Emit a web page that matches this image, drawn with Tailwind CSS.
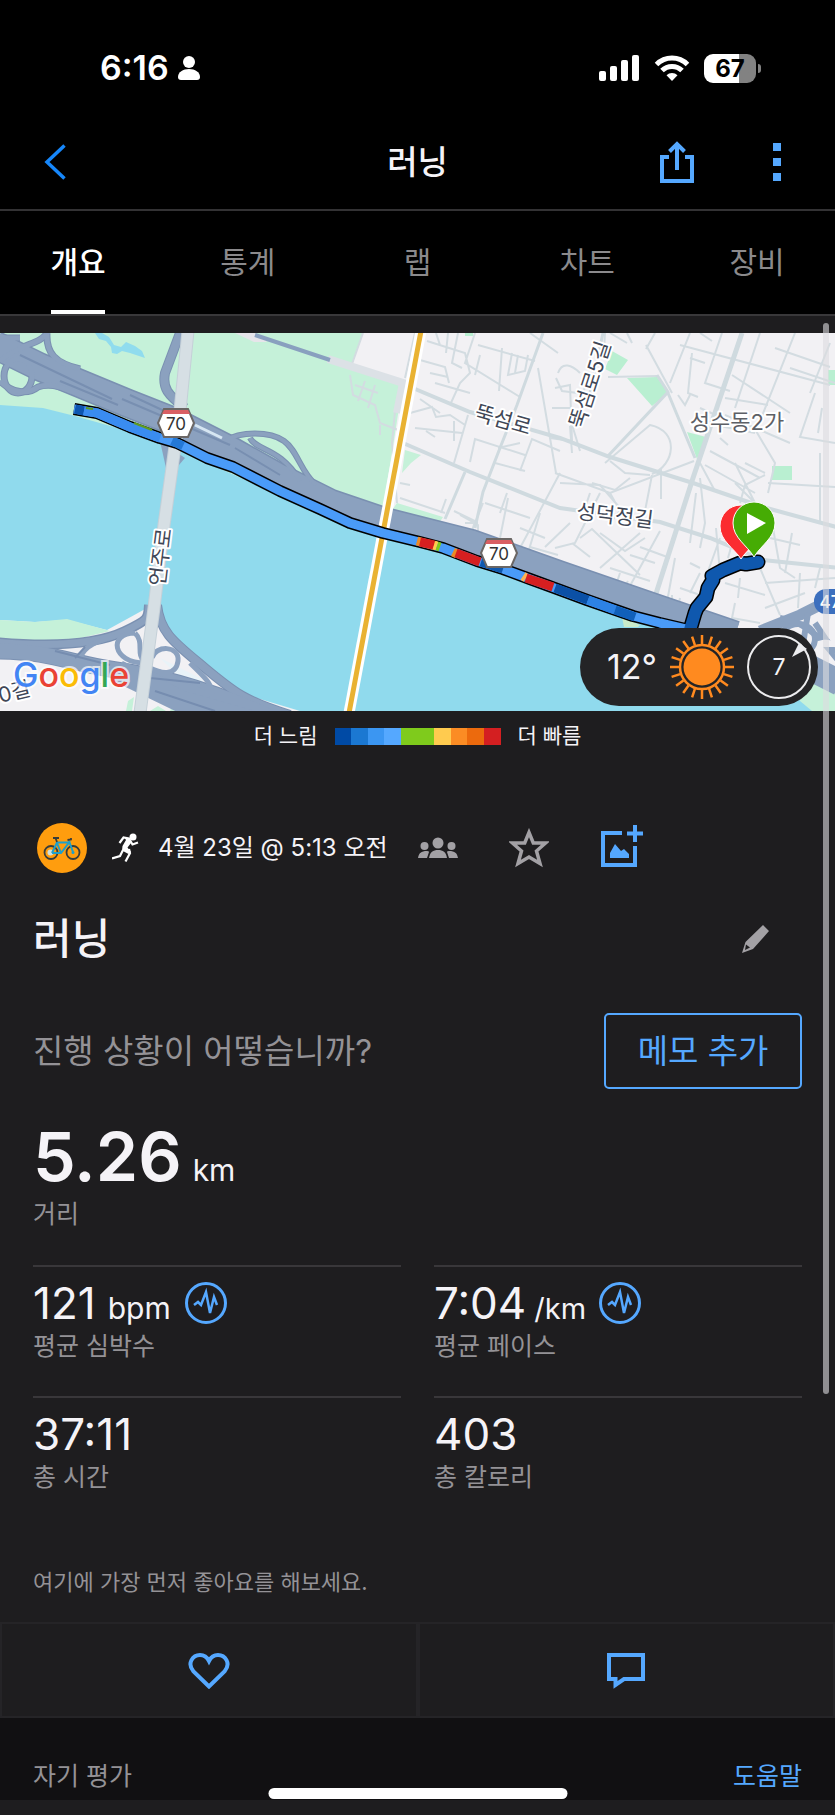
<!DOCTYPE html>
<html lang="ko">
<head>
  <meta charset="UTF-8">
  <meta name="viewport" content="width=device-width, initial-scale=1.0">
  <title>러닝</title>
  <script src="https://cdn.jsdelivr.net/npm/@tailwindcss/browser@4"></script>
</head>
<body class="relative min-h-screen bg-[#1e1d1f] text-[#f5f3f7] font-['Inter','Noto_Sans_CJK_KR',sans-serif]">

  <header class="bg-black">
    <!-- Status bar -->
    <div class="flex items-center justify-between pt-[50px] pb-[29px] pl-[100px] pr-[74px] text-white">
      <div class="flex items-center gap-2 h-9">
        <span class="text-[34px] leading-9 font-semibold">6:16</span>
        <svg class="w-6 h-6" viewBox="0 0 24 24" fill="currentColor"><circle cx="12" cy="6" r="6"/><path d="M1 21c0-5 5-8 11-8s11 3 11 8c0 2-1 3-3 3H4c-2 0-3-1-3-3z"/></svg>
      </div>
      <div class="flex items-center gap-[14px]">
        <svg class="w-[41px] h-[26px]" viewBox="0 0 41 26" fill="currentColor">
          <rect x="0" y="16" width="7" height="10" rx="2"/><rect x="11" y="11" width="7" height="15" rx="2"/><rect x="22" y="5" width="7" height="21" rx="2"/><rect x="33" y="0" width="7" height="26" rx="2"/>
        </svg>
        <svg class="w-[36px] h-[26px]" viewBox="0 0 36 26" fill="none" stroke="currentColor" stroke-width="5">
          <path d="M2.500 9.500a22 22 0 0 1 31 0"/><path d="M8 15.500a14.200 14.200 0 0 1 20 0"/><path d="M18 26l-5.500-5.800a8 8 0 0 1 11 0z" fill="currentColor" stroke="none"/>
        </svg>
        <div class="flex items-center gap-[2px]">
          <div class="w-[52px] h-[29px] rounded-[9px] bg-linear-to-r from-white from-67% to-[#828282] to-67% text-black text-[24px] leading-[29px] font-bold text-center">67</div>
          <div class="w-[3px] h-[9px] rounded-r-full bg-[#828282]"></div>
        </div>
      </div>
    </div>

    <!-- Title bar -->
    <div class="grid grid-cols-[1fr_auto_1fr] items-center h-[96px] pl-[44px] pr-[54px] border-b-2 border-[#333234]">
      <button aria-label="뒤로" class="justify-self-start">
        <svg class="w-[24px] h-[38px]" viewBox="0 0 24 38" fill="none" stroke="#1687fb" stroke-width="3.500"><path d="M20.500 2.500L3 19l17.500 16.500"/></svg>
      </button>
      <h1 class="text-[33px] leading-10 font-medium pl-[10px]">러닝</h1>
      <div class="flex items-center justify-self-end gap-[79px]">
        <button aria-label="공유">
          <svg class="w-[34px] h-[42px]" viewBox="0 0 34 42" fill="none" stroke="#55a8ff" stroke-width="4"><path d="M9 16H2v24h30V16h-7M17 29V4M9.500 10.500L17 3l7.500 7.500"/></svg>
        </button>
        <button aria-label="더 보기">
          <svg class="w-2 h-[38px]" viewBox="0 0 8 38" fill="#55a8ff"><path d="M0 0h8v8H0zM0 15h8v8H0zM0 30h8v8H0z"/></svg>
        </button>
      </div>
    </div>

    <!-- Tabs -->
    <nav class="flex justify-between px-[51px] h-[105px] border-b-2 border-[#39383a] text-[30px] text-[#8b8a8c] whitespace-nowrap">
      <a href="#" class="flex items-center justify-center w-[54px] pt-1 border-b-4 border-white text-white font-medium">개요</a>
      <a href="#" class="flex items-center justify-center w-[54px] pt-1 border-b-4 border-transparent">통계</a>
      <a href="#" class="flex items-center justify-center w-[54px] pt-1 border-b-4 border-transparent">랩</a>
      <a href="#" class="flex items-center justify-center w-[54px] pt-1 border-b-4 border-transparent">차트</a>
      <a href="#" class="flex items-center justify-center w-[54px] pt-1 border-b-4 border-transparent">장비</a>
    </nav>
  </header>

  <!-- Map -->
  <section class="relative mt-[17px] h-[378px] overflow-hidden">
    <svg class="w-full h-full" viewBox="0 0 835 378" preserveAspectRatio="xMidYMid slice">
      <rect width="835" height="378" fill="#f2f1f4"/>

      <!-- parks -->
      <g fill="#c5f1d9">
        <path d="M0 0H363L352 32L403 50L380 195L0 110z"/>
        <path d="M405 117L421 122L411 130L402 140zM397 170L443 184L437 193L390 180z"/>
        <path d="M605 36L612 18L628 27L617 42zM627 45L657 44L668 60L652 73zM687 99L706 104L697 126zM772 133h20v14h-20zM828 37h8v15h-8zM465 0h8v3h-8z" fill="#b9efd1"/>
      </g>
      <path d="M235 0h20l14 5-3 4h-12z" fill="#e6e5ea"/>
      <path d="M95 0L99 6L106 8L111 14L112 20L117 21L122 18L130 20L145 25L142 18L135 13L126 9L121 14L114 12L109 4L102 0z" fill="#90dcee"/>

      <!-- small streets -->
      <g fill="none" stroke="#d3dce1" stroke-width="2">
        <path d="M363 0L352 31M415 0L405 45M350 42L353 62L375 72L380 90L398 97M355 52L378 60M365 48L358 68M375 52L368 75M395 78L392 110L397 170M380 92V102"/>
        <path d="M420 27L445 34L449 50M427 8L465 20L470 40L460 50L450 72M436 0L440 12M448 0L446 20M458 0L452 30L462 35M475 0L465 30L520 64M478 12L535 28M480 22L475 42M502 15L499 58M512 20L508 42L525 38L528 22M518 22L515 40M430 40L448 44M435 50L470 60"/>
        <path d="M410 80L432 74L436 84L450 82L465 92M415 95L462 100M420 66L440 80M426 98L435 104M454 88V108M468 82L454 130M470 129L475 106L525 122M498 115L520 110M495 130L525 138M520 138L532 106L560 118M530 0L558 20M538 35L556 140M560 140L520 215M555 55L570 52L572 108L550 105M552 75H572"/>
        <path d="M400 150L410 152M400 165L445 180M446 166L441 180M454 178L475 188L470 205M485 170L530 185M500 180L507 160M483 170L475 190M508 165L500 205M460 182L478 192V202M465 190H478M540 180L525 230M520 195L545 205M545 214L570 190M530 214L558 222"/>
        <path d="M558 40C562 28 572 32 580 40M556 45L562 58L578 60M570 85L580 118M608 44L657 43M605 0L604 18M610 0L627 10M627 0L632 10M646 12L672 60M646 16L655 0M585 50L580 95M570 93L572 120M605 130L650 92C680 98 675 132 652 141M610 128L625 140L650 142M630 145L615 157L592 150M652 142L645 178M661 136V166"/>
        <path d="M555 140L610 160L694 128M560 150L600 152L620 175M600 160L575 210L555 215M610 160L620 178L610 190M590 160L585 175M580 205L592 196L640 242M572 210L590 224M640 200L600 235M600 200L625 218L645 205M660 198L625 262M610 235L650 248M620 240L615 255L660 265M630 222L655 230M640 214L670 225"/>
        <path d="M670 50L690 0M690 62L685 72L678 62M690 25L705 30M692 20L688 60L698 64M680 12L830 52M700 0L712 8M722 0L705 50L730 58M725 65L768 72M732 42L790 80M760 0L735 75M795 0L756 98L775 130L768 160M775 15L830 34M830 10L810 60M790 35L835 50M725 82L790 110M815 60L800 104L835 110M822 75L818 100"/>
        <path d="M700 75L745 95M705 90L755 100M720 105L728 112M710 118L760 145M700 130L715 158M765 142L745 152L740 170M705 132L755 160M745 130L765 140M768 150L835 154M820 120L820 190M755 175L770 200M735 130L755 170L735 150M700 145L705 190L700 215"/>
        <path d="M696 160L690 210M716 195L720 240M720 205L702 255M735 200L728 225M773 195L780 235L795 245M770 205L800 212M792 200L785 240M700 240L690 260M675 225L665 280M680 255L700 262M690 230L700 235M725 250L765 262M740 245L738 265M760 235L780 282M765 250L835 245M800 240L798 275M765 275L805 260M820 235L815 255M735 270L732 285L760 290"/>
        <path d="M620 260L645 268M628 248L622 258M668 268L662 282M672 262L672 285M680 265L677 280"/>
        <path d="M0 320L50 325M5 322L12 340M20 350L25 378M70 345V378M0 370L60 350M60 352L130 372M50 378L95 352M100 350V378"/>
      </g>

      <!-- larger streets -->
      <g fill="none" stroke="#cfdadf" stroke-width="4">
        <path d="M408 53L470 79L560 105L610 124L693 150L763 174L840 195"/>
        <path d="M403 110L470 139L560 175L660 189L710 205L763 227L840 235"/>
        <path d="M543 0L517 72L500 115L483 159L475 195M465 139L445 186" stroke-width="3"/>
        <path d="M742 0L693 145L653 270" stroke-width="5"/>
        <path d="M657 42L668 59L608 123M668 60L695 125M603 0L590 60" stroke-width="3"/>
        <path d="M328 26L403 50L397 80" stroke-width="8" stroke="#dce1e6"/>
      </g>
      <path d="M255 2L330 27" stroke="#89a0bf" stroke-width="4"/>

      <!-- river -->
      <path d="M0 72L43 75L75 83L160 107L207 130L280 162L350 194L417 210L477 232L560 260L620 284L683 298L760 335L835 360V378H300L253 364L213 341L190 320L160 290L147 275L107 297L67 287L35 289L0 287z" fill="#90daed"/>
      <path d="M0 287L35 289L67 286L110 298L60 310H0z" fill="#c5f1d9"/>
      <path d="M798 340L835 350V378H812L800 368z" fill="#c5f1d9"/>
      <path d="M622 284L640 292L638 294H624z" fill="#c9eccb"/>
      <path d="M185 340L230 365L290 378H170z" fill="#c5f1d9"/>

      <!-- riverside expressway, north bank -->
      <g fill="none" stroke-linejoin="round">
        <g stroke="#7a90b1" stroke-width="7">
          <path d="M47 0C46 20 55 30 80 36M-2 5H20M0 28C20 10 40 12 47 0"/>
          <ellipse cx="18" cy="43" rx="14" ry="17"/>
          <path d="M0 48C12 60 28 62 38 54C55 48 70 58 110 74"/>
          <path d="M180 0L165 40C162 55 168 62 185 75" stroke-width="10"/>
          <path d="M225 108C240 98 270 98 284 108S300 138 316 152M250 105C256 118 280 114 300 148" stroke-width="6"/>
        </g>
        <path d="M-5 12L40 34L127 70L173 88L230 117L280 145L330 170L383 188L470 210L560 242L650 273L735 302" stroke="#7a90b1" stroke-width="29"/>
        <path d="M-5 12L40 34L127 70L173 88L230 117L280 145L330 170L383 188L470 210L560 242L650 273L735 302" stroke="#8ba1bf" stroke-width="26"/>
        <g stroke="#8ba1bf" stroke-width="5">
          <path d="M47 0C46 20 55 30 80 36M-2 5H20M0 28C20 10 40 12 47 0"/>
          <ellipse cx="18" cy="43" rx="14" ry="17"/>
          <path d="M0 48C12 60 28 62 38 54C55 48 70 58 110 74"/>
          <path d="M180 0L165 40C162 55 168 62 185 75" stroke-width="8"/>
          <path d="M225 108C240 98 270 98 284 108S300 138 316 152M250 105C256 118 280 114 300 148" stroke-width="4"/>
        </g>
        <path d="M20 22L112 66M122 66L230 112M60 48L118 72M130 62L190 90M235 115L280 142" stroke="#788fb1" stroke-width="2"/>
        <path d="M195 92L222 105" stroke="#d6e6f2" stroke-width="3"/>
        <!-- east interchange -->
        <g stroke="#8ba1bf">
          <path d="M760 298L800 282L840 262" stroke-width="11"/>
          <path d="M765 312L840 350" stroke-width="26"/>
          <ellipse cx="798" cy="306" rx="17" ry="15" stroke-width="6"/>
          <path d="M815 290L835 320M808 280L800 330M780 285C810 290 825 310 840 330" stroke-width="6"/>
        </g>
        <path d="M818 308C830 305 835 308 837 314H817z" fill="#f2f1f4"/>
      </g>

      <!-- south bank -->
      <path d="M0 325L60 335L130 362L128 378H0z" fill="#f2f1f4"/>
      <path d="M160 325L200 345L215 360L180 345z" fill="#e9f3f8"/>
      <g fill="none" stroke-linejoin="round">
        <g stroke="#7a90b1">
          <path d="M-5 309C60 315 100 310 125 298S148 285 149 272" stroke-width="10"/>
          <path d="M157 272C160 300 175 310 205 335S245 368 290 382" stroke-width="10"/>
          <path d="M-5 318C50 318 70 330 110 336S200 352 270 384" stroke-width="17"/>
        </g>
        <g stroke="#8ba1bf">
          <path d="M-5 309C60 315 100 310 125 298S148 285 149 272" stroke-width="7"/>
          <path d="M157 272C160 300 175 310 205 335S245 368 290 382" stroke-width="8"/>
          <path d="M-5 318C50 318 70 330 110 336S200 352 270 384" stroke-width="15"/>
          <path d="M118 338L180 368L250 388" stroke-width="22"/>
          <path d="M80 325C85 312 98 308 115 303M135 300C108 300 112 330 145 330M135 300C145 310 135 320 145 330" stroke-width="5"/>
          <path d="M152 325C155 312 180 312 178 328S160 340 150 335M160 340C180 350 200 345 212 362M190 330C205 345 212 350 212 362" stroke-width="5"/>
        </g>
        <path d="M55 318L110 332M150 345L200 350M155 358L215 378M75 325L85 314" stroke="#768db0" stroke-width="2"/>
      </g>
      <path d="M128 368l6-4-2 14h-6zM150 378l8-5 8 5z" fill="#c5f1d9"/>

      <!-- Yeongdong bridge -->
      <path d="M160 108L166 135L172 140L185 125z" fill="#8ba1bf"/>
      <path d="M188 -2L180 78L164 192L154 275L140 380" fill="none" stroke="#c5d0d8" stroke-width="13"/>
      <path d="M188 -2L180 78L164 192L154 275L140 380" fill="none" stroke="#d6dfe4" stroke-width="11"/>

      <!-- subway line -->
      <path d="M421 -2L349 380" stroke="#fff" stroke-width="11"/>
      <path d="M421 -2L349 380" stroke="#e9b232" stroke-width="5"/>

      <!-- run track -->
      <g fill="none" stroke-linejoin="round">
        <path d="M74 76L97 80L130 94L160 105L177 110L207 125L233 134L280 158L320 176L350 190L383 200L420 209L443 215L477 228L503 236L530 246L560 257L587 267L633 283L660 290L690 297" stroke="#000" stroke-width="12"/>
        <path d="M690 297L695 280L697 275L706 264L708 255L713 247L712 243L723 237L740 230L746 231L758 229" stroke="#000" stroke-width="15" stroke-linecap="round"/>
        <path d="M74 76L97 80L130 94L160 105L177 110L207 125L233 134L280 158L320 176L350 190L383 200L420 209L443 215L477 228L503 236L530 246L560 257L587 267L633 283L660 290L690 297" stroke="#4a9bf8" stroke-width="9"/>
        <path d="M690 297L695 280L697 275L706 264L708 255L713 247L712 243L723 237L740 230L746 231L758 229" stroke="#0f58ae" stroke-width="12" stroke-linecap="round"/>
        <g stroke-width="9">
          <path d="M75 76L84 78" stroke="#0d56b0"/>
          <path d="M84 78L97 80L130 94L160 105" stroke="#3a8cf0"/>
          <path d="M172 108L183 113" stroke="#2478d6"/>
          <path d="M417 208L436 213" stroke="#ec8a25"/><path d="M420 209L434 212" stroke="#d61f20"/>
          <path d="M434 212L437 213" stroke="#ffcb4f"/><path d="M437 213L440 214" stroke="#7fcb1c"/>
          <path d="M453 219L457 221" stroke="#ec8a25"/><path d="M456 220L480 229" stroke="#d61f20"/>
          <path d="M481 229L503 236" stroke="#0f58ae"/>
          <path d="M523 243L526 245" stroke="#ffb34f"/><path d="M526 245L553 254" stroke="#d61f20"/>
          <path d="M555 255L588 267" stroke="#0b50a6"/>
          <path d="M588 267L615 277" stroke="#2d82e4"/>
          <path d="M615 277L635 284" stroke="#1160ba"/>
        </g>
        <path d="M86 75L93 76M134 90L152 97" stroke="#5f9c22" stroke-width="2"/>
      </g>

      <!-- street labels -->
      <g font-size="21" fill="#3f4756" stroke="#fff" stroke-width="4" stroke-linejoin="round" paint-order="stroke" text-anchor="middle">
        <text transform="translate(168 225) rotate(-83)">언주로</text>
        <text transform="translate(501 94) rotate(16)">뚝섬로</text>
        <text transform="translate(597 54) rotate(-72)">뚝섬로5길</text>
        <text transform="translate(614 190) rotate(7)">성덕정길</text>
        <text x="737" y="97" fill="#5d6066" font-size="22">성수동2가</text>
        <text transform="translate(16 366) rotate(-14)">0길</text>
      </g>

      <!-- route shields -->
      <g font-size="17" text-anchor="middle">
        <g transform="translate(176 90)">
          <path d="M-12-14H12L18 0L12 14H-12L-18 0z" fill="#fff" stroke="#6b6765" stroke-width="2"/>
          <path d="M-12-13H12L14-9H-14z" fill="#d95f63"/>
          <text y="7" fill="#333">70</text>
        </g>
        <g transform="translate(499 220)">
          <path d="M-12-14H12L18 0L12 14H-12L-18 0z" fill="#fff" stroke="#6b6765" stroke-width="2"/>
          <path d="M-12-13H12L14-9H-14z" fill="#d95f63"/>
          <text y="7" fill="#333">70</text>
        </g>
        <rect x="814" y="256" width="40" height="25" rx="12" fill="#3c6fbe"/>
        <text x="830" y="275" fill="#fff" font-weight="500">47</text>
      </g>

      <!-- finish and start pins -->
      <path d="M741 226C734 215 720 208 720 193a21 21 0 0 1 42 0C762 208 748 215 741 226z" fill="#fb2c30" stroke="#fff" stroke-width="1"/>
      <path d="M754 224C747 212 733 205 733 190a21 21 0 0 1 42 0C775 205 761 212 754 224z" fill="#46ac04" stroke="#fff" stroke-width="1"/>
      <path d="M747 180L766 190L747 201z" fill="#fff"/>

      <text x="13" y="354" font-size="34" font-weight="500" stroke="#fff" stroke-opacity=".7" stroke-width="4" paint-order="stroke"><tspan fill="#4285f4">G</tspan><tspan fill="#ea4335">o</tspan><tspan fill="#fbbc05">o</tspan><tspan fill="#4285f4">g</tspan><tspan fill="#34a853">l</tspan><tspan fill="#ea4335">e</tspan></text>
    </svg>

    <!-- Weather pill -->
    <div class="absolute right-[17px] bottom-[5px] flex items-center justify-between w-[238px] h-[78px] rounded-full bg-[#242426] pl-[27px] pr-[6px]">
      <span class="text-[34px] leading-10">12°</span>
      <div class="flex items-center gap-3">
        <svg class="w-[64px] h-[64px]" viewBox="-32 -32 64 64" fill="none" stroke="#ff8a1f">
          <circle r="18.500" fill="#ff8a1f" stroke="none"/>
          <circle r="22" stroke-width="2.500"/>
          <g stroke-width="2.500">
            <path d="M0-23V-32M0 23V32M23 0H32M-23 0H-32"/>
            <path d="M7.100-21.900L9.900-30.400M-7.100 21.900L-9.900 30.400M21.900 7.100L30.400 9.900M-21.900-7.100L-30.400-9.900"/>
            <path d="M13.500-18.600L18.800-25.900M-13.500 18.600L-18.800 25.900M18.600 13.500L25.900 18.800M-18.600-13.500L-25.900-18.800"/>
            <path d="M18.600-13.500L25.900-18.800M-18.600 13.500L-25.900 18.800M13.500 18.600L18.800 25.900M-13.500-18.600L-18.800-25.900"/>
            <path d="M21.900-7.100L30.400-9.900M-21.900 7.100L-30.400 9.900M7.100 21.900L9.900 30.400M-7.100-21.900L-9.900-30.400"/>
          </g>
        </svg>
        <svg class="w-[66px] h-[66px]" viewBox="-33 -33 66 66">
          <circle r="31" fill="none" stroke="#ececee" stroke-width="2"/>
          <path d="M28-18L13-10L20-24z" fill="#ececee"/>
          <text y="8" font-size="23" fill="#f5f3f7" text-anchor="middle">7</text>
        </svg>
      </div>
    </div>
  </section>

  <!-- Pace legend -->
  <div class="flex items-center justify-center gap-[17px] h-[50px] text-[21px] leading-[30px]">
    <span>더 느림</span>
    <div class="grid grid-cols-10 w-[166px] h-[17px]">
      <i class="bg-[#004aa5]"></i><i class="bg-[#1b78d2]"></i><i class="bg-[#3b96f2]"></i><i class="bg-[#55a8ff]"></i><i class="bg-[#7fcb1c]"></i><i class="bg-[#7fcb1c]"></i><i class="bg-[#ffcb4f]"></i><i class="bg-[#fb8c24]"></i><i class="bg-[#ec6a0d]"></i><i class="bg-[#d41f21]"></i>
    </div>
    <span>더 빠름</span>
  </div>

  <main class="px-[33px]">
    <!-- Activity info -->
    <div class="flex items-center mt-[62px] pl-1 h-[50px] whitespace-nowrap">
      <svg class="w-[50px] h-[50px]" viewBox="0 0 50 50" fill="none">
        <circle cx="25" cy="25" r="25" fill="#ff9d0e"/>
        <circle cx="14" cy="29.500" r="6.500" stroke="#373c3b" stroke-width="1.800"/><circle cx="36" cy="29.500" r="6.500" stroke="#373c3b" stroke-width="1.800"/>
        <circle cx="13.500" cy="29.500" r="3" fill="#cfe0de"/><circle cx="36" cy="29.500" r="1.500" fill="#1e9fca"/>
        <path d="M15 30L20 19.500H32L24 30H15M20 20L24 30M36 29L32 18" stroke="#1e9fca" stroke-width="2"/>
        <path d="M16 15H22M30.500 17L34 16.500V15M20 19L18.500 15" stroke="#373c3b" stroke-width="1.800"/>
      </svg>
      <svg class="w-[27px] h-[30px] ml-[25px]" viewBox="0 0 27 30">
        <circle cx="21" cy="4" r="3.500" fill="#fff"/>
        <path d="M7.500 10L11.500 4.500L17 5.500L20.500 11.500L26 9.500M17 16L18 20L13.500 28.500M11 17L8 23L0 25.500" fill="none" stroke="#fff" stroke-width="2.200"/>
        <path d="M12 4L18 6L19 10L15.500 14.500L19 19L16.500 21L10 17.500L10.500 13L14 7z" fill="#fff"/>
      </svg>
      <span class="ml-[19px] text-[24px] leading-8">4월 23일 @ 5:13 오전</span>
      <svg class="w-10 h-[22px] ml-[30px]" viewBox="0 0 40 22" fill="#a3a1a5"><circle cx="20" cy="6" r="5.500"/><path d="M11 21c1-6 4-8 9-8s8 2 9 8z"/><circle cx="6.500" cy="9" r="4"/><path d="M0 21c1-5 3-7 9-7q2 0 2 1L9 21zM40 21c-1-5-3-7-9-7q-2 0-2 1l2 6z"/><circle cx="33.500" cy="9" r="4"/></svg>
      <button aria-label="즐겨찾기" class="ml-[51px]">
        <svg class="w-10 h-10" viewBox="0 0 40 40" fill="none" stroke="#a3a1a5" stroke-width="3.500"><path d="M20 4.500L24.300 15H36.500L27.500 23L31 35.500L20 29L9 35.500L12.500 23L3.500 15H15.700z"/></svg>
      </button>
      <button aria-label="사진 추가" class="ml-[52px] pb-1">
        <svg class="w-[42px] h-[42px]" viewBox="0 0 42 42" fill="none" stroke="#55a8ff" stroke-width="4"><path d="M21 8H2V40H34V21M34 0V17M26 8.500H42"/><path d="M9 33V28L14 19L20 26L23 24L28 29V33z" fill="#55a8ff" stroke="none"/></svg>
      </button>
    </div>

    <div class="flex items-center justify-between mt-[42px] h-12 pr-[32px]">
      <h2 class="text-[42px] leading-[48px] font-medium">러닝</h2>
      <button aria-label="이름 편집">
        <svg class="w-7 h-7" viewBox="0 0 28 28" fill="#a3a1a5"><path fill-rule="evenodd" d="M21 0L27 6L11 24L0 28L3.500 17zM4 19.500L3 25L8 22.500z"/></svg>
      </button>
    </div>

    <div class="flex items-center justify-between mt-[50px] text-[33px] leading-10 whitespace-nowrap">
      <p class="text-[#949296]">진행 상황이 어떻습니까?</p>
      <button class="w-[198px] h-[76px] border-2 border-[#55a8ff] rounded-[5px] text-[#55a8ff]">메모 추가</button>
    </div>

    <!-- Distance -->
    <div class="mt-[37px]">
      <div class="flex items-baseline gap-[11px] h-[60px]">
        <span class="text-[68px] leading-[60px] font-semibold">5.26</span>
        <span class="text-[30px] leading-[30px]">km</span>
      </div>
      <div class="mt-[13px] text-[25px] leading-[30px] text-[#949296]">거리</div>
    </div>

    <!-- Stats -->
    <div class="grid grid-cols-2 gap-x-[33px] mt-[36px]">
      <div class="border-t-2 border-[#39373a] pt-[15px] pb-[35px]">
        <div class="flex items-baseline h-[42px]">
          <span class="text-[44px] leading-[42px]">121</span>
          <span class="ml-3 text-[30px] leading-[30px]">bpm</span>
          <button aria-label="심박수 차트" class="self-center ml-[14px]">
            <svg class="w-[42px] h-[42px]" viewBox="0 0 42 42" fill="none" stroke="#55a8ff"><circle cx="21" cy="21" r="19.500" stroke-width="3"/><path d="M9 23L13 20L16 23L21 10L25 31L29 15L32 23" stroke-width="2.500"/></svg>
          </button>
        </div>
        <div class="mt-[7px] text-[25px] leading-[30px] text-[#949296]">평균 심박수</div>
      </div>
      <div class="border-t-2 border-[#39373a] pt-[15px] pb-[35px]">
        <div class="flex items-baseline h-[42px]">
          <span class="text-[44px] leading-[42px]">7:04</span>
          <span class="ml-2 text-[29px] leading-[30px]">/km</span>
          <button aria-label="페이스 차트" class="self-center ml-[13px]">
            <svg class="w-[42px] h-[42px]" viewBox="0 0 42 42" fill="none" stroke="#55a8ff"><circle cx="21" cy="21" r="19.500" stroke-width="3"/><path d="M9 23L13 20L16 23L21 10L25 31L29 15L32 23" stroke-width="2.500"/></svg>
          </button>
        </div>
        <div class="mt-[7px] text-[25px] leading-[30px] text-[#949296]">평균 페이스</div>
      </div>
      <div class="border-t-2 border-[#39373a] pt-[15px] pb-[35px]">
        <div class="text-[44px] leading-[42px]">37:11</div>
        <div class="mt-[7px] text-[25px] leading-[30px] text-[#949296]">총 시간</div>
      </div>
      <div class="border-t-2 border-[#39373a] pt-[15px] pb-[35px]">
        <div class="text-[44px] leading-[42px]">403</div>
        <div class="mt-[7px] text-[25px] leading-[30px] text-[#949296]">총 칼로리</div>
      </div>
    </div>

    <p class="mt-[40px] text-[22px] leading-[30px] text-[#949296]">여기에 가장 먼저 좋아요를 해보세요.</p>
  </main>

  <!-- Like / comment -->
  <div class="grid grid-cols-2 mt-[25px] h-24 border-2 border-[#252427]">
    <button aria-label="좋아요" class="flex items-center justify-center pt-[2px] border-r-2 border-[#252427]">
      <svg class="w-[42px] h-[36px]" viewBox="0 0 42 36" fill="none" stroke="#55a8ff" stroke-width="4"><path d="M21 33.500L5.500 18.500C-1.500 10 5 2 12 2c4 0 7 2 9 6c2-4 5-6 9-6c7 0 13.500 8 6.500 16.500z"/></svg>
    </button>
    <button aria-label="댓글" class="flex items-center justify-center pt-[2px] border-l-2 border-[#252427]">
      <svg class="w-[38px] h-[36px]" viewBox="0 0 38 36" fill="none" stroke="#55a8ff" stroke-width="4"><path d="M2 2H36V26H17L8.500 32V26H2z"/></svg>
    </button>
  </div>

  <footer class="flex items-center justify-between bg-[#111012] px-[33px] pt-[43px] pb-[9px] text-[25px] leading-[30px]">
    <span class="text-[#949296]">자기 평가</span>
    <a href="#" class="text-[#55a8ff]">도움말</a>
  </footer>
  <div class="h-[15px]"></div>

  <!-- Scroll indicator and home bar -->
  <div class="absolute top-[323px] right-[6px] w-[6px] h-[1071px] rounded-full bg-[#dcdce0]/60"></div>
  <div class="absolute bottom-4 left-1/2 -translate-x-1/2 w-[299px] h-[11px] rounded-full bg-white"></div>
</body>
</html>
